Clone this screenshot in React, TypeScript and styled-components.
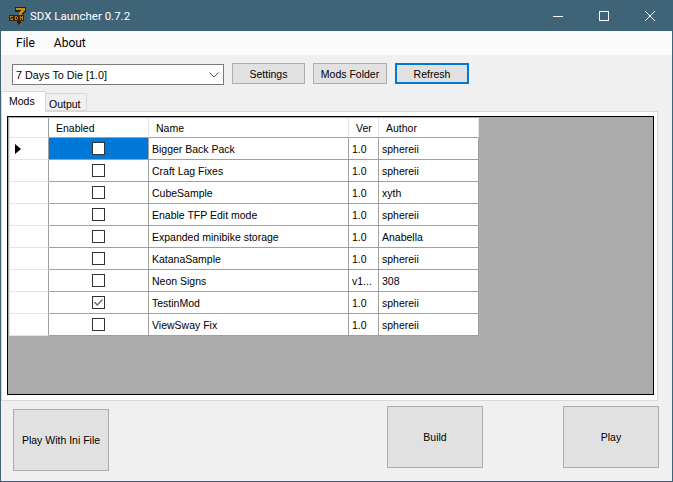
import React from "react";
import styled, { createGlobalStyle } from "styled-components";

const GlobalStyle = createGlobalStyle`
  html, body {
    margin: 0;
    padding: 0;
    background: #3f6478;
  }
  * {
    box-sizing: border-box;
  }
`;

const WINDOW_FONT = `Roboto, "Noto Sans", sans-serif`;
const FORM_FONT = `"Liberation Sans", Arial, sans-serif`;
const LINE = "#a0a0a0";
const SOFT_LINE = "#e4e4e4";

const Window = styled.div`
  width: 673px;
  height: 482px;
  border: 1px solid #3f6478;
  border-top: 0;
  background: #f0f0f0;
  display: flex;
  flex-direction: column;
  overflow: hidden;
  color: #000;
`;

const TitleBar = styled.div`
  height: 31px;
  margin: 0 -1px;
  background: #3f6478;
  display: flex;
  align-items: center;
  justify-content: space-between;
  color: #fff;
  font: 11.5px ${WINDOW_FONT};
`;

const TitleLeft = styled.div`
  display: flex;
  align-items: center;
  gap: 4px;
  padding-left: 9px;
`;

const Controls = styled.div`
  display: flex;
`;

const ControlButton = styled.div`
  width: 46px;
  height: 31px;
  display: flex;
  align-items: center;
  justify-content: center;
`;

const MenuBar = styled.div`
  height: 24px;
  background: #fbfbfb;
  display: flex;
  align-items: center;
  gap: 5px;
  padding-left: 8px;
  font: 12px ${WINDOW_FONT};
`;

const MenuItem = styled.div`
  padding: 0 7px;
`;

const Toolbar = styled.div`
  height: 36px;
  padding: 8px 0 0 11px;
  display: flex;
  align-items: flex-start;
  font: 10.5px ${FORM_FONT};
`;

const Combo = styled.div`
  width: 212px;
  height: 21px;
  margin: 1px 8px 0 0;
  background: #fff;
  border: 1px solid #7a7a7a;
  display: flex;
  align-items: center;
  justify-content: space-between;
  padding: 0 4px 0 3px;
  font-size: 10.8px;
`;

const ToolButton = styled.div<{ $width: number; $focused?: boolean }>`
  width: ${(p) => p.$width}px;
  height: 21px;
  margin-right: 8px;
  background: #e1e1e1;
  border: ${(p) => (p.$focused ? "2px solid #0078d7" : "1px solid #adadad")};
  display: flex;
  align-items: center;
  justify-content: center;
`;

const TabStrip = styled.div`
  height: 20px;
  display: flex;
  align-items: flex-end;
  font: 10.5px ${FORM_FONT};
  position: relative;
  z-index: 1;
`;

const Tab = styled.div<{ $active?: boolean }>`
  height: ${(p) => (p.$active ? 21 : 18)}px;
  width: ${(p) => (p.$active ? 45 : 41)}px;
  margin-bottom: ${(p) => (p.$active ? -1 : 0)}px;
  padding: ${(p) => (p.$active ? "3px 0 0 7px" : "4px 0 0 3px")};
  background: ${(p) => (p.$active ? "#fff" : "#f0f0f0")};
  border: 1px solid #d9d9d9;
  border-bottom: ${(p) => (p.$active ? 0 : "1px solid #d9d9d9")};
  border-left-width: ${(p) => (p.$active ? 1 : 0)}px;
`;

const TabPanel = styled.div`
  width: 657px;
  height: 290px;
  background: #fff;
  border: 1px solid #d9d9d9;
  padding: 4px 3px 5px 5px;
`;

const GridView = styled.div`
  height: 100%;
  background: #ababab;
  border: 1px solid #000;
  padding: 1px;
  font: 10.5px ${FORM_FONT};
`;

const Table = styled.div`
  width: 470px;
  display: grid;
  grid-template-columns: 40px 100px 200px 30px 100px;
  grid-auto-rows: 22px;
  grid-template-rows: 20px;
`;

const CornerCell = styled.div`
  background: #fff;
  border-left: 1px solid ${SOFT_LINE};
  border-right: 1px solid ${LINE};
  border-bottom: 1px solid ${SOFT_LINE};
`;

const HeaderCell = styled.div<{ $pad: number }>`
  background: #fff;
  border-right: 1px solid ${SOFT_LINE};
  border-bottom: 1px solid ${LINE};
  padding-left: ${(p) => p.$pad}px;
  display: flex;
  align-items: center;
  white-space: nowrap;
`;

const RowHeader = styled.div`
  background: #fff;
  border-left: 1px solid ${SOFT_LINE};
  border-right: 1px solid ${LINE};
  border-bottom: 1px solid ${SOFT_LINE};
  padding-left: 5px;
  display: flex;
  align-items: center;
`;

const RowArrow = styled.div`
  width: 0;
  height: 0;
  border-left: 6px solid #000;
  border-top: 5px solid transparent;
  border-bottom: 5px solid transparent;
`;

const Cell = styled.div`
  background: #fff;
  border-right: 1px solid ${LINE};
  border-bottom: 1px solid ${LINE};
  padding-left: 3px;
  display: flex;
  align-items: center;
  white-space: nowrap;
  overflow: hidden;
`;

const CheckCell = styled(Cell)<{ $selected?: boolean }>`
  padding: 0;
  justify-content: center;
  background: ${(p) => (p.$selected ? "#0078d7" : "#fff")};
`;

const CheckBox = styled.div`
  width: 13px;
  height: 13px;
  background: #fff;
  border: 1px solid #333;
  display: flex;
  align-items: center;
  justify-content: center;
`;

const Footer = styled.div`
  flex: 1;
  padding: 5px 13px 0 12px;
  display: flex;
  align-items: flex-start;
  font: 10.5px ${FORM_FONT};
`;

const BigButton = styled.div<{ $drop?: number; $pushed?: boolean; $gap?: number }>`
  width: 96px;
  height: 62px;
  margin-top: ${(p) => p.$drop ?? 0}px;
  margin-left: ${(p) => (p.$pushed ? "auto" : `${p.$gap ?? 0}px`)};
  background: #e1e1e1;
  border: 1px solid #adadad;
  display: flex;
  align-items: center;
  justify-content: center;
`;

const mods = [
  { name: "Bigger Back Pack", ver: "1.0", author: "sphereii" },
  { name: "Craft Lag Fixes", ver: "1.0", author: "sphereii" },
  { name: "CubeSample", ver: "1.0", author: "xyth" },
  { name: "Enable TFP Edit mode", ver: "1.0", author: "sphereii" },
  { name: "Expanded minibike storage", ver: "1.0", author: "Anabella" },
  { name: "KatanaSample", ver: "1.0", author: "sphereii" },
  { name: "Neon Signs", ver: "v1...", author: "308" },
  { name: "TestinMod", ver: "1.0", author: "sphereii", enabled: true },
  { name: "ViewSway Fix", ver: "1.0", author: "sphereii" },
];

const Logo = () => (
  <svg width="17" height="18" viewBox="0 0 17 18" shapeRendering="crispEdges">
    <path d="M6 0h11v4l-3 3-1 5-2 5-2 1-1-4 1-5 2-4H6z" fill="#2e1f0a" />
    <path d="M7 1h9v2l-3 3-1 4H9l1-4 2-3H7z" fill="#c88a1c" />
    <path d="M0 8h15v6H0z" fill="#3a2508" />
    <path d="M1 9h3v1H2v1h2v2H1v-1h2v-1H1zM6 9h2v1h1v2H8v1H6zM7 10v2h1v-2zM11 9h1v1h1V9h1v4h-1v-2h-1v2h-1z" fill="#b57c1a" />
  </svg>
);

const Chevron = () => (
  <svg width="10" height="6" viewBox="0 0 10 6">
    <path d="M0.5 0.5 5 5 9.5 0.5" fill="none" stroke="#555" strokeWidth="1" />
  </svg>
);

const CheckMark = () => (
  <svg width="11" height="11" viewBox="0 0 11 11">
    <path d="M1.5 5 4.2 8 9.5 2.5" fill="none" stroke="#666" strokeWidth="1.4" />
  </svg>
);

export default function App() {
  return (
    <Window>
      <GlobalStyle />
      <TitleBar>
        <TitleLeft>
          <Logo />
          SDX Launcher 0.7.2
        </TitleLeft>
        <Controls>
          <ControlButton>
            <svg width="10" height="10" viewBox="0 0 10 10">
              <path d="M0 5.5h10" stroke="#fff" strokeWidth="1" />
            </svg>
          </ControlButton>
          <ControlButton>
            <svg width="10" height="10" viewBox="0 0 10 10">
              <rect x="0.5" y="0.5" width="9" height="9" fill="none" stroke="#fff" />
            </svg>
          </ControlButton>
          <ControlButton>
            <svg width="10" height="10" viewBox="0 0 10 10">
              <path d="M0 0l10 10M10 0L0 10" stroke="#fff" strokeWidth="1" />
            </svg>
          </ControlButton>
        </Controls>
      </TitleBar>
      <MenuBar>
        <MenuItem>File</MenuItem>
        <MenuItem>About</MenuItem>
      </MenuBar>
      <Toolbar>
        <Combo>
          7 Days To Die [1.0]
          <Chevron />
        </Combo>
        <ToolButton $width={73}>Settings</ToolButton>
        <ToolButton $width={74}>Mods Folder</ToolButton>
        <ToolButton $width={74} $focused>
          Refresh
        </ToolButton>
      </Toolbar>
      <TabStrip>
        <Tab $active>Mods</Tab>
        <Tab>Output</Tab>
      </TabStrip>
      <TabPanel>
        <GridView>
          <Table>
            <CornerCell />
            <HeaderCell $pad={7}>Enabled</HeaderCell>
            <HeaderCell $pad={7}>Name</HeaderCell>
            <HeaderCell $pad={7}>Ver</HeaderCell>
            <HeaderCell $pad={7}>Author</HeaderCell>
            {mods.map((mod, i) => (
              <React.Fragment key={mod.name}>
                <RowHeader>{i === 0 && <RowArrow />}</RowHeader>
                <CheckCell $selected={i === 0}>
                  <CheckBox>{mod.enabled && <CheckMark />}</CheckBox>
                </CheckCell>
                <Cell>{mod.name}</Cell>
                <Cell>{mod.ver}</Cell>
                <Cell>{mod.author}</Cell>
              </React.Fragment>
            ))}
          </Table>
        </GridView>
      </TabPanel>
      <Footer>
        <BigButton $drop={3}>Play With Ini File</BigButton>
        <BigButton $pushed>Build</BigButton>
        <BigButton $gap={80}>Play</BigButton>
      </Footer>
    </Window>
  );
}
